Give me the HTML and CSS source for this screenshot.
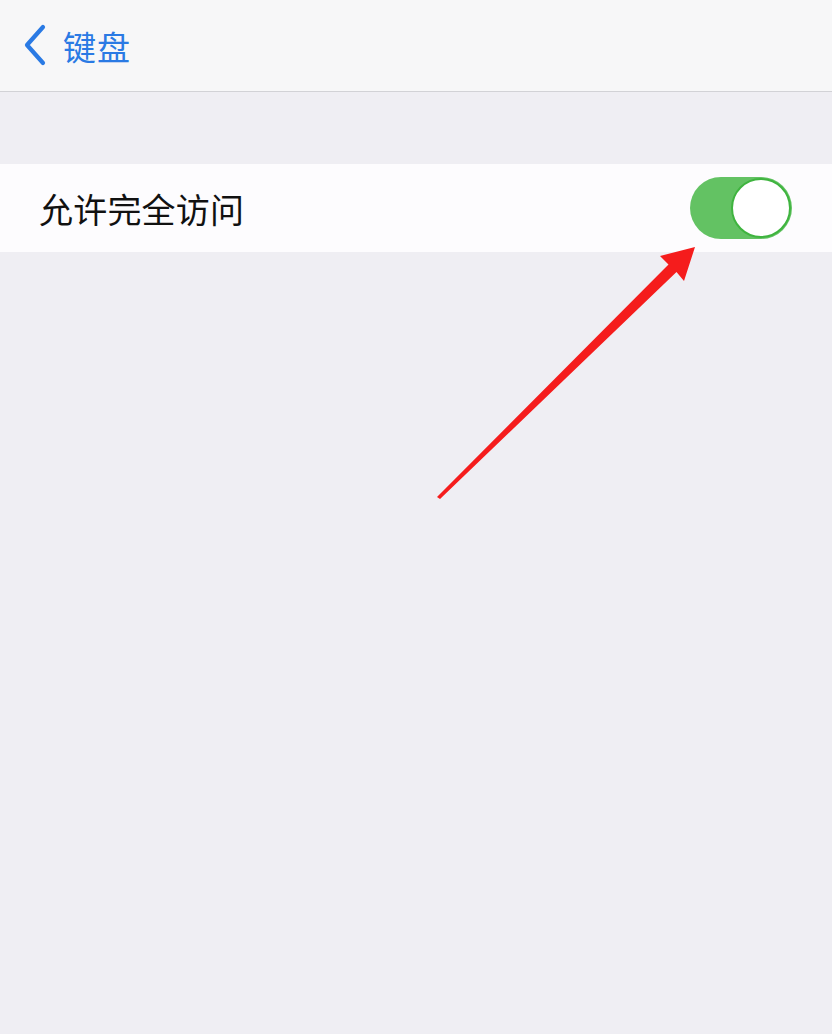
FILE: index.html
```html
<!DOCTYPE html>
<html lang="zh">
<head>
<meta charset="utf-8">
<link rel="stylesheet" href="styles.css">
</head>
<body>
<div class="page">
  <header class="nav">
    <svg class="chev" width="26" height="42" viewBox="0 0 26 42"><path d="M21 3 L5 21 L21 39" fill="none" stroke="#2a7ae4" stroke-width="4.2" stroke-linecap="round" stroke-linejoin="round"/></svg>
    <span class="back">键盘</span>
  </header>
  <div class="spacer"></div>
  <section class="row">
    <span class="label">允许完全访问</span>
    <div class="toggle"><div class="knob"></div></div>
  </section>
  <svg class="arrow" width="832" height="1034" viewBox="0 0 832 1034">
    <polygon points="695,247 660,256 668.5,264.5 437,497 440,499 676.5,272 684,281" fill="#f51c1c"/>
  </svg>
</div>
</body>
</html>
```
FILE: styles.css
```css
html, body { margin: 0; padding: 0; }
body {
  width: 832px; height: 1034px; overflow: hidden;
  background: #efeef3;
  font-family: "Noto Sans CJK SC", "Noto Sans", sans-serif;
}
.page { position: relative; width: 832px; height: 1034px; }
.nav {
  height: 92px;
  background: #f7f7f8;
  border-bottom: 1px solid #d2d2d6;
  display: flex; align-items: center;
  padding-left: 22px;
  box-sizing: border-box;
}
.chev { margin-top: -2px; }
.back {
  color: #2a7ae4; font-size: 33px; margin-left: 15px; margin-top: 0;
  letter-spacing: 1px;
}
.spacer { height: 72px; }
.row {
  height: 88px; background: #fdfcfe;
  display: flex; align-items: center; justify-content: space-between;
  padding: 0 40px 0 39px;
  box-sizing: border-box;
}
.label { font-size: 34px; color: #111; letter-spacing: 0.2px; margin-top: 0; }
.toggle {
  width: 102px; height: 62px; border-radius: 31px;
  background: #63c263;
  display: flex; justify-content: flex-end; align-items: center;
  box-sizing: border-box; padding-right: 1px;
  margin-top: 0;
}
.knob {
  width: 56px; height: 56px; border-radius: 50%;
  background: #fff; border: 2px solid #3fb43f;
}
.arrow { position: absolute; left: 0; top: 0; pointer-events: none; }
```
